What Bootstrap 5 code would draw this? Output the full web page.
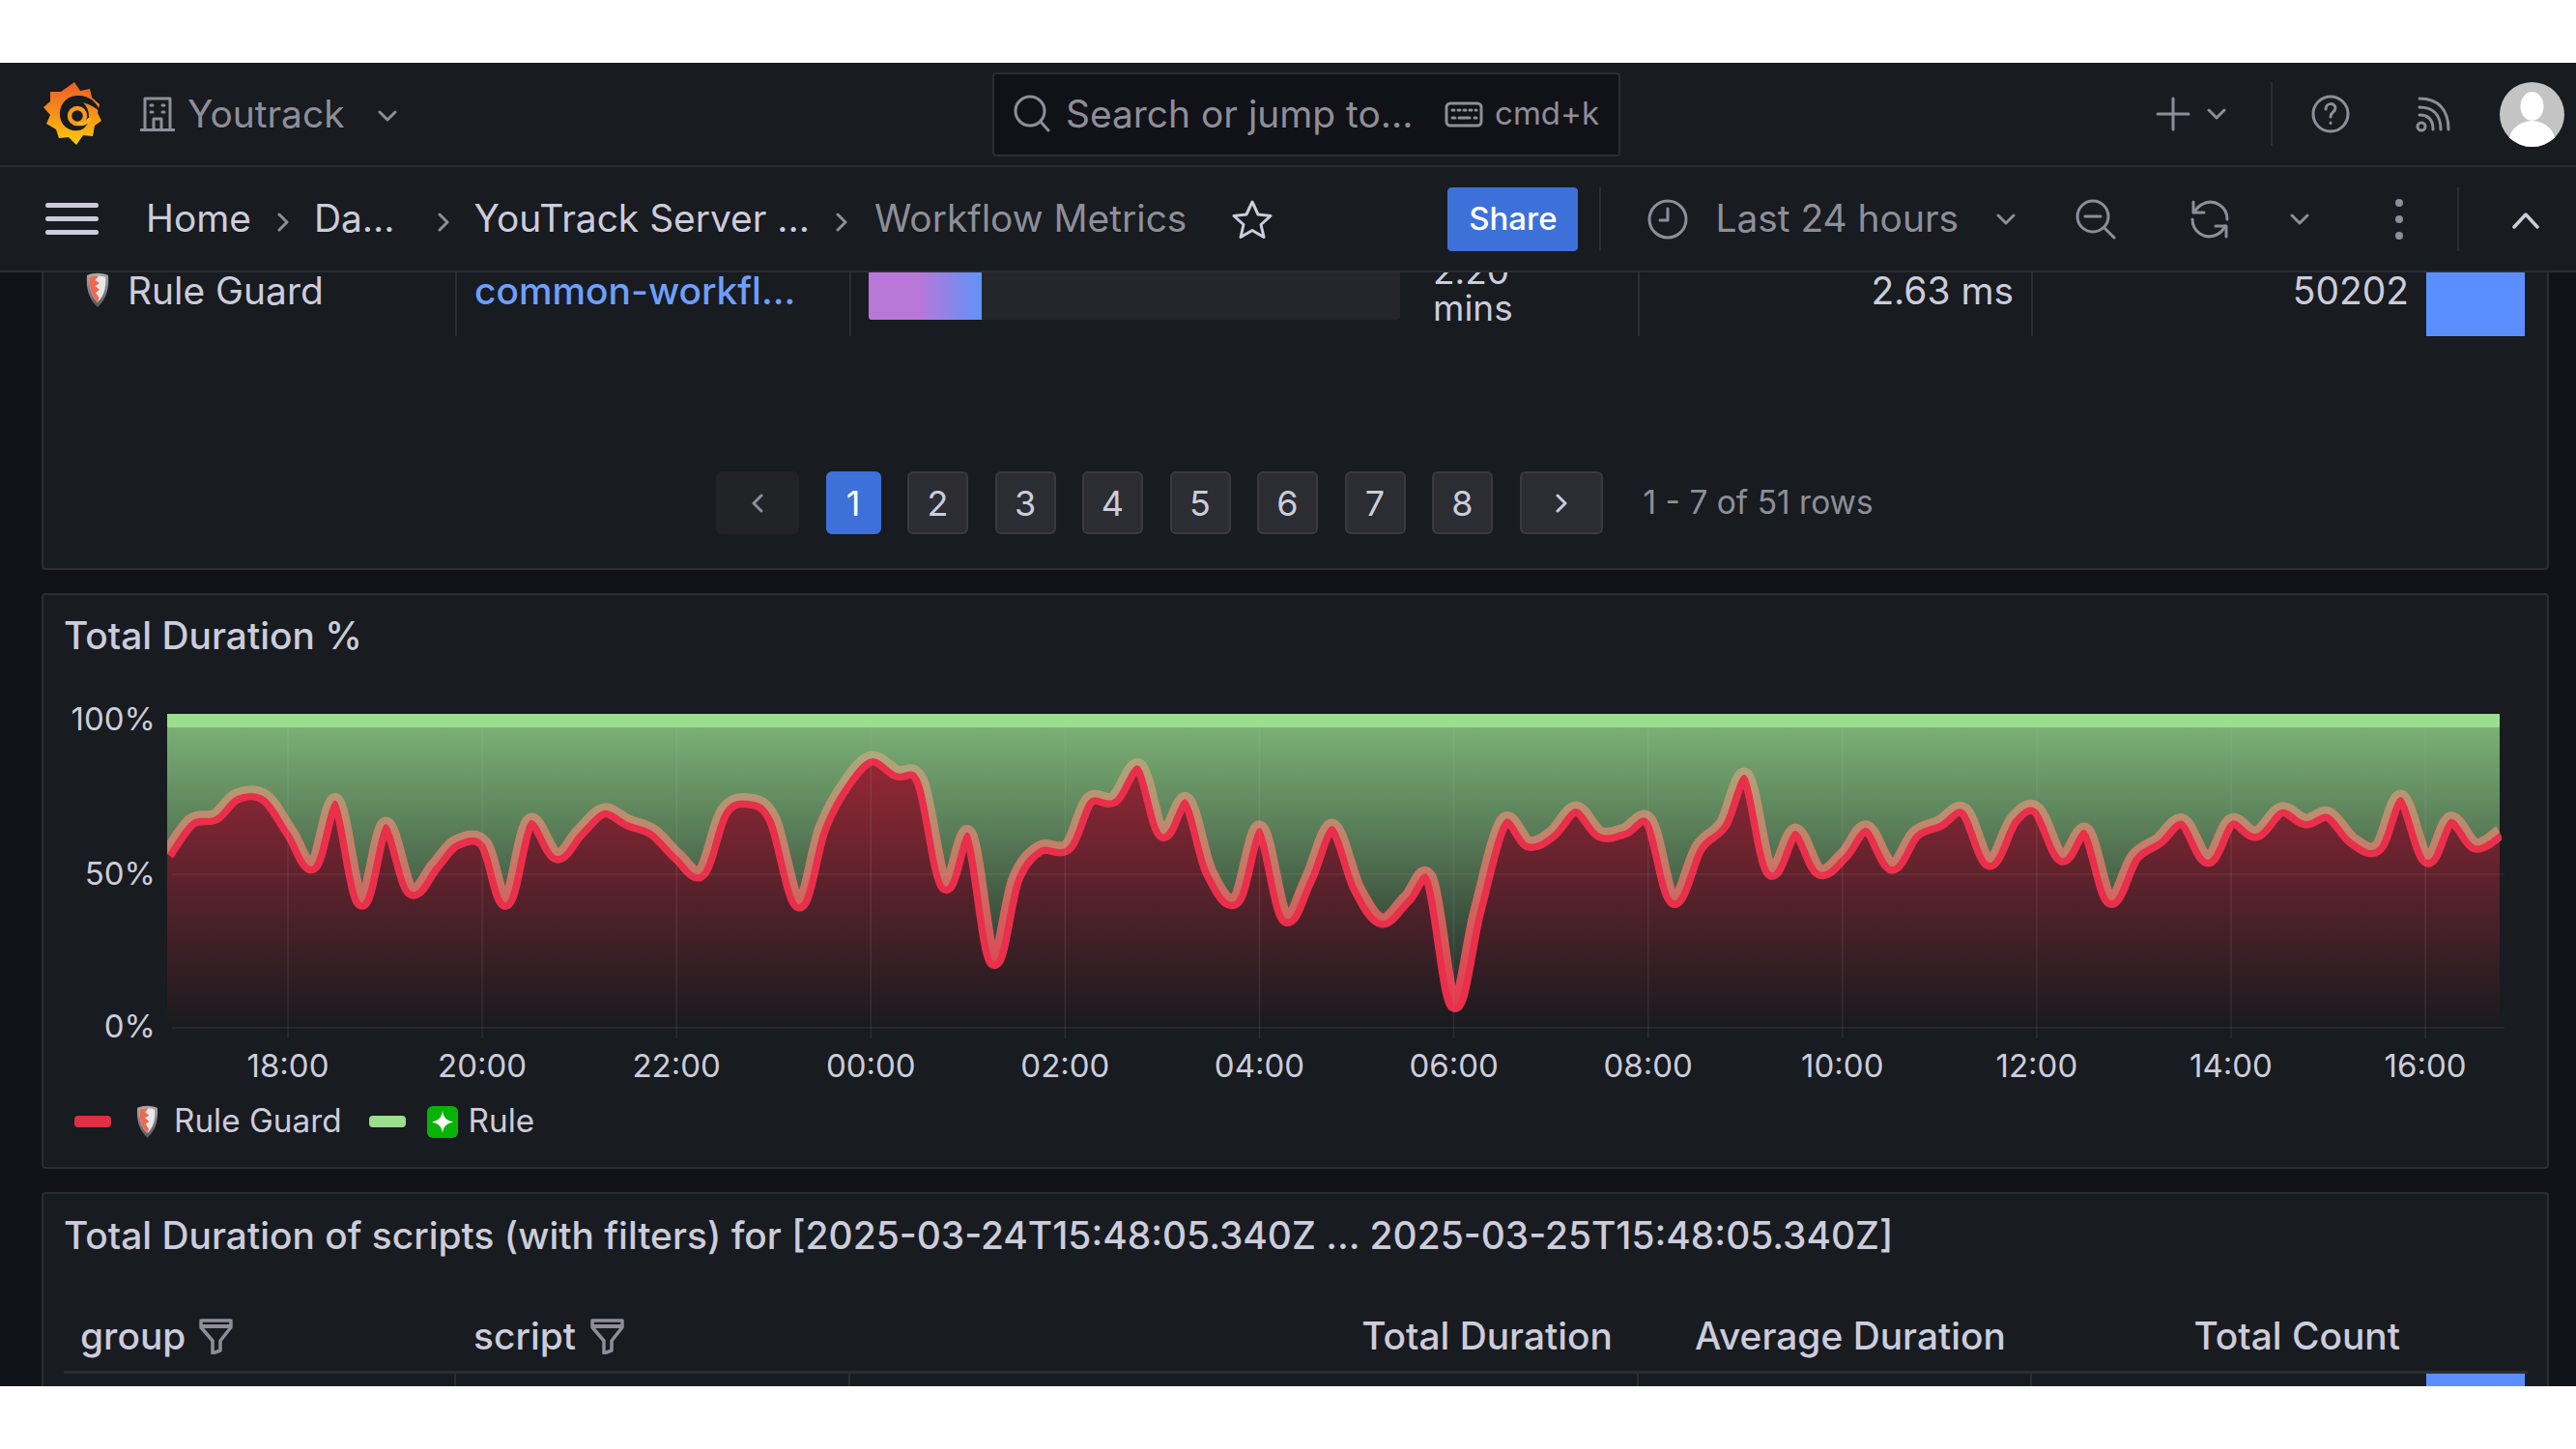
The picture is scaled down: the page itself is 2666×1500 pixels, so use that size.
<!DOCTYPE html>
<html lang="en">

<head>
  <meta charset="UTF-8">
  <meta name="viewport" content="width=device-width, initial-scale=1.0">
  <title>Workflow Metrics</title>
  <link href="https://cdn.jsdelivr.net/npm/bootstrap@5.3.0/dist/css/bootstrap.min.css" rel="stylesheet">
  <style>
    html, body { background: #fff; }
    body { font-family: Inter, "Liberation Sans", sans-serif; font-size: 38.900px; color: #ccccdc; overflow: hidden; }
    .app-frame { height: 1370px; margin-top: 65px; background: #111217; overflow: hidden; }
    .muted-text { color: #8e8e9a; }
    svg { display: block; flex: none; }
    .ico { fill: none; stroke: #8e8e9a; stroke-width: 3; stroke-linecap: round; stroke-linejoin: round; }

    .top-bar { height: 108px; background: #181b1f; border-bottom: 2px solid #2b2d31; display: grid; grid-template-columns: 1027px 650px 1fr; align-items: center; }
    .search-box { height: 87px; background: #111217; border: 2px solid #2b2d31; border-radius: 4px; padding: 0 20px 0 20px; }
    .search-box .hint { font-size: 33px; margin-left: 12px; }
    .search-box .placeholder-text { margin-left: 16px; }
    .org-name { margin-left: 13px; }

    .tool-bar { height: 109px; background: #181b1f; border-bottom: 2px solid #2b2d31; }
    .crumb-sep { margin: 6px 26px 0 27px; }
    .vr-line { width: 2px; background: #2b2d31; height: 66px; }
    .share-btn { --bs-btn-bg: #3d71d9; --bs-btn-border-color: #3d71d9; --bs-btn-color: #fff; width: 135px; height: 66px; padding: 0; font-size: 33px; font-weight: 500; border-radius: 4px; }

    .dash-scroll { height: 1153px; overflow: hidden; padding: 0 28px 0 43px; }
    .dash-inner { margin-top: -44px; display: flex; flex-direction: column; gap: 24px; }
    .dash-panel { background: #181b1f; border: 2px solid #2b2d31; border-radius: 4px; color: #ccccdc; }
    .panel-title { font-weight: 500; line-height: 46px; padding-left: 21px; }

    .data-table { table-layout: fixed; width: 2547px; margin: 0 0 0 21px; border-collapse: collapse; color: #ccccdc; }
    .data-table td { padding: 0; font-size: 38.900px; font-weight: 400; vertical-align: top; background: transparent; border: 0; }
    .data-table td + td { border-left: 2px solid #2b2d31; }
    .data-table a { color: #6e9fff; font-weight: 500; text-decoration: none; }
    .cell-inner { height: 108px; padding: 38px 18px 0; line-height: 46px; }
    .bar-cell { height: 91px; padding: 0 18px; gap: 34px; }
    .bar-track { width: 550px; height: 91px; background: #24262b; border-radius: 3px; overflow: hidden; }
    .bar-fill { height: 100%; background: linear-gradient(90deg, #b877d9 45%, #5f93f8 100%); }
    .wrap-text { font-size: 37px; line-height: 38px; padding-top: 22px; }
    .shield-cell { margin: 4px 19px 0 0; }
    .count-bar { width: 102px; background: #5b8fff; flex: none; }

    .pager-row { margin: 140px 0 35px; height: 65px; padding-left: 696px; }
    .pager-list { margin: 0; gap: 28.500px; }
    .pager-list .page-link { width: 63px; height: 65px; padding: 0; display: flex; align-items: center; justify-content: center; font-size: 36px; color: #ccccdc; background: #2b2d33; border: 2px solid #393b40; border-radius: 6px !important; margin: 0; }
    .pager-list .page-item.active .page-link { width: 57px; background: #3d71d9; border-color: #3d71d9; color: #fff; }
    .pager-list .wide-link .page-link { width: 86px; }
    .pager-list .page-item.disabled .page-link { background: #222327; border-color: #222327; }
    .pager-info { font-size: 33.500px; margin-left: 42px; }

    .chart-panel { height: 596px; padding-top: 19px; }
    .chart-svg { margin-top: 35px; }
    .chart-svg text { font-family: Inter, "Liberation Sans", sans-serif; font-size: 33px; fill: #ccccdc; }
    .chart-legend { font-size: 33.300px; padding-left: 32px; height: 46px; }
    .legend-pill { width: 38px; height: 12px; border-radius: 4px; margin-right: 25px; }
    .pill-red { background: #e02f44; }
    .pill-green { background: #9ade8e; }

    .table-panel { height: 300px; padding-top: 20px; }
    .head-row { margin-left: 21px; width: 2550px; height: 120px; border-bottom: 3px solid #2b2d31; font-weight: 500; padding-top: 58px; }
    .head-col { height: 46px; line-height: 46px; padding-right: 27px; }
    .col-a { width: 406px; padding-left: 17px; }
    .col-b { width: 408px; padding-left: 18px; }
    .col-c { width: 816px; }
    .col-d { width: 407px; }
    .col-e { width: 408px; }
    .last-spacer { width: 102px; }
    .tail-row { margin-left: 21px; width: 2550px; height: 60px; }
    .tail-cell { border-right: 2px solid #2b2d31; }
  </style>
</head>

<body>
  <div class="app-frame">
    <!-- top bar -->
    <div class="top-bar">
      <div class="d-flex align-items-center" style="padding-left:45px">
        <svg width="60" height="66" viewBox="0 0 60 66">
          <defs>
            <linearGradient id="logoGrad" x1="0" y1="0" x2="0" y2="1">
              <stop offset="0" stop-color="#f05a28" />
              <stop offset="1" stop-color="#fbca0a" />
            </linearGradient>
          </defs>
          <path fill="url(#logoGrad)" d="M32 0 L38 9 L48 7 L50 16 L58 23 L56 32 L60 40 L53 45 L51 56 L41 55 L34 65 L26 57 L16 58 L13 49 L3 43 L7 34 L0 26 L7 20 L7 10 L18 10 Z" />
          <path fill="#181b1f" d="M59 32C56 20 46 13 34 14 22 15 16 25 17 35c1 11 10 16 19 15 7-1 11-7 11-14 0-6-2-11-6-15 9 3 14 6 18 11z" />
          <circle cx="35" cy="35" r="8" fill="none" stroke="#f79a1c" stroke-width="4.500" />
          <path fill="none" stroke="#f9b414" stroke-width="4" stroke-linecap="round" d="M37 43c4 1 8-1 10-4" />
          <circle cx="35" cy="35" r="3" fill="#181b1f" />
        </svg>
        <svg style="margin-left:40px" width="36" height="38" viewBox="0 0 36 38">
          <path class="ico" d="M5 35V3h26v32M1 35.500h34M14 35V24h8v11" />
          <path class="ico" stroke-width="4" d="M11 10h2M23 10h2M11 17h2M23 17h2" />
        </svg>
        <span class="org-name muted-text">Youtrack</span>
        <svg style="margin-left:34px;margin-top:4px" width="20" height="12" viewBox="0 0 20 12"><path class="ico" d="M2 2l8 8 8-8" /></svg>
      </div>
      <div class="search-box d-flex align-items-center muted-text">
        <svg width="38" height="40" viewBox="0 0 38 40"><circle class="ico" cx="17" cy="17" r="15" /><path class="ico" d="M28 28l8 9" /></svg>
        <span class="placeholder-text">Search or jump to...</span>
        <svg class="ms-auto" width="40" height="27" viewBox="0 0 40 27">
          <rect class="ico" x="2" y="2" width="36" height="23" rx="4" />
          <path class="ico" d="M8 9h2M14 9h2M20 9h2M26 9h2M32 9h1M8 17h3M15 17h11M31 17h2" />
        </svg>
        <span class="hint">cmd+k</span>
      </div>
      <div class="d-flex align-items-center justify-content-end" style="padding-right:12px">
        <svg width="36" height="36" viewBox="0 0 36 36"><path class="ico" d="M18 2v32M2 18h32" /></svg>
        <svg style="margin-left:17px" width="20" height="12" viewBox="0 0 20 12"><path class="ico" d="M2 2l8 8 8-8" /></svg>
        <div class="vr-line" style="margin-left:46px"></div>
        <svg style="margin-left:40px" width="40" height="42" viewBox="0 0 40 42">
          <circle class="ico" cx="20" cy="21" r="18" />
          <path class="ico" d="M15 16c0-7 10-7 10-1 0 4-5 4-5 9M20 30v.5" />
        </svg>
        <svg style="margin-left:68px" width="36" height="38" viewBox="0 0 36 38">
          <circle cx="6" cy="32" r="4" fill="none" stroke="#8e8e9a" stroke-width="3" />
          <path class="ico" d="M4 20c9 0 14 5 14 15M4 12c14 0 22 8 22 23M4 3c20 0 30 12 30 32" />
        </svg>
        <svg style="margin-left:51px" width="67" height="67" viewBox="0 0 67 67">
          <clipPath id="avatarClip"><circle cx="33.500" cy="33.500" r="33.500" /></clipPath>
          <circle cx="33.500" cy="33.500" r="33.500" fill="#c4c4c4" />
          <g clip-path="url(#avatarClip)" fill="#fff">
            <ellipse cx="33.500" cy="25" rx="12" ry="15" />
            <ellipse cx="33.500" cy="62" rx="24" ry="22" />
          </g>
        </svg>
      </div>
    </div>

    <!-- breadcrumbs and time picker -->
    <div class="tool-bar d-flex align-items-center">
      <svg style="margin-left:47px" width="55" height="34" viewBox="0 0 55 34" fill="#ccccdc">
        <rect y="0" width="55" height="5" rx="2.500" /><rect y="14" width="55" height="5" rx="2.500" /><rect y="28" width="55" height="5" rx="2.500" />
      </svg>
      <span style="margin-left:49px">Home</span>
      <svg class="crumb-sep" width="12" height="20" viewBox="0 0 12 20"><path class="ico" d="M2 2l8 8-8 8" /></svg>
      <span>Da...</span>
      <svg style="margin:6px 26px 0 44px" width="12" height="20" viewBox="0 0 12 20"><path class="ico" d="M2 2l8 8-8 8" /></svg>
      <span>YouTrack Server ...</span>
      <svg style="margin:6px 28px 0 27px" width="12" height="20" viewBox="0 0 12 20"><path class="ico" d="M2 2l8 8-8 8" /></svg>
      <span class="muted-text">Workflow Metrics</span>
      <svg style="margin-left:47px" width="42" height="40" viewBox="0 0 42 40">
        <path fill="none" stroke="#ccccdc" stroke-width="3" stroke-linejoin="round" d="M21 2l6 13 13 1.500-10 9 3 13-12-7-12 7 3-13-10-9L15 15z" />
      </svg>
      <button type="button" class="btn share-btn" style="margin-left:181px">Share</button>
      <div class="vr-line" style="margin-left:22px"></div>
      <svg style="margin-left:48px" width="42" height="42" viewBox="0 0 42 42">
        <circle class="ico" cx="21" cy="21" r="19" /><path class="ico" d="M21 10v12h-8" />
      </svg>
      <span class="muted-text" style="margin-left:28px">Last 24 hours</span>
      <svg style="margin-left:39px" width="20" height="12" viewBox="0 0 20 12"><path class="ico" d="M2 2l8 8 8-8" /></svg>
      <svg style="margin-left:62px" width="42" height="42" viewBox="0 0 42 42">
        <circle class="ico" cx="18" cy="18" r="16" /><path class="ico" d="M30 30l10 10M10 18h16" />
      </svg>
      <svg style="margin-left:76px" width="42" height="42" viewBox="0 0 42 42">
        <path class="ico" d="M4 3v11h11M38 39V28H27" />
        <path class="ico" d="M5 14C10 4 22 0 31 6c6 4 8 10 8 15M37 28c-5 10-17 14-26 8-6-4-8-10-8-15" />
      </svg>
      <svg style="margin-left:62px" width="20" height="12" viewBox="0 0 20 12"><path class="ico" d="M2 2l8 8 8-8" /></svg>
      <svg style="margin-left:89px" width="8" height="42" viewBox="0 0 8 42" fill="#8e8e9a"><circle cx="4" cy="4" r="4" /><circle cx="4" cy="21" r="4" /><circle cx="4" cy="38" r="4" /></svg>
      <div class="vr-line" style="margin-left:56px"></div>
      <svg style="margin-left:55px;margin-top:4px" width="28" height="17" viewBox="0 0 28 17"><path fill="none" stroke="#ccccdc" stroke-width="3.500" stroke-linecap="round" stroke-linejoin="round" d="M2 15L14 2l12 13" /></svg>
    </div>

    <!-- dashboard -->
    <div class="dash-scroll">
      <div class="dash-inner">
        <div class="dash-panel">
          <table class="data-table table-borderless mb-0">
            <colgroup><col style="width:406px"><col style="width:408px"><col style="width:816px"><col style="width:407px"><col style="width:510px"></colgroup>
            <tbody>
              <tr>
                <td>
                  <div class="cell-inner d-flex" style="padding-left:23px">
                    <svg class="shield-cell" width="24" height="36" viewBox="0 0 24 36"><use href="#shieldIcon" /></svg>
                    <span>Rule Guard</span>
                  </div>
                </td>
                <td><div class="cell-inner"><a href="#">common-workfl...</a></div></td>
                <td>
                  <div class="bar-cell d-flex">
                    <div class="bar-track"><div class="bar-fill" style="width:21.300%"></div></div>
                    <div class="wrap-text">2.20<br>mins</div>
                  </div>
                </td>
                <td><div class="cell-inner text-end">2.63 ms</div></td>
                <td>
                  <div class="d-flex justify-content-end" style="height:108px">
                    <div class="cell-inner text-end">50202</div>
                    <div class="count-bar"></div>
                  </div>
                </td>
              </tr>
            </tbody>
          </table>
          <div class="pager-row d-flex align-items-center">
            <ul class="pagination pager-list">
              <li class="page-item disabled wide-link"><a class="page-link" href="#"><svg width="12" height="20" viewBox="0 0 12 20"><path class="ico" d="M10 2l-8 8 8 8" /></svg></a></li>
              <li class="page-item active"><a class="page-link" href="#">1</a></li>
              <li class="page-item"><a class="page-link" href="#">2</a></li>
              <li class="page-item"><a class="page-link" href="#">3</a></li>
              <li class="page-item"><a class="page-link" href="#">4</a></li>
              <li class="page-item"><a class="page-link" href="#">5</a></li>
              <li class="page-item"><a class="page-link" href="#">6</a></li>
              <li class="page-item"><a class="page-link" href="#">7</a></li>
              <li class="page-item"><a class="page-link" href="#">8</a></li>
              <li class="page-item wide-link"><a class="page-link" href="#"><svg width="12" height="20" viewBox="0 0 12 20"><path fill="none" stroke="#ccccdc" stroke-width="3" stroke-linecap="round" stroke-linejoin="round" d="M2 2l8 8-8 8" /></svg></a></li>
            </ul>
            <span class="pager-info muted-text">1 - 7 of 51 rows</span>
          </div>
        </div>

        <div class="dash-panel chart-panel">
          <div class="panel-title">Total Duration %</div>
          <!-- svg coordinates are page pixels, shifted by the translate below -->
          <svg class="chart-svg" width="2590" height="422" viewBox="0 0 2590 422">
            <defs>
              <linearGradient id="redFill" gradientUnits="userSpaceOnUse" x1="0" y1="746" x2="0" y2="1064">
                <stop offset="0" stop-color="#e02f44" stop-opacity=".72" />
                <stop offset="1" stop-color="#e02f44" stop-opacity="0" />
              </linearGradient>
              <linearGradient id="greenFill" gradientUnits="userSpaceOnUse" x1="0" y1="746" x2="0" y2="1064">
                <stop offset="0" stop-color="#96d98d" stop-opacity=".8" />
                <stop offset="1" stop-color="#96d98d" stop-opacity="0" />
              </linearGradient>
              <clipPath id="plotClip"><rect x="173" y="730" width="2416" height="340" /></clipPath>
            </defs>
            <g transform="translate(-45,-716)">
              <g clip-path="url(#plotClip)">
                <path id="redArea" fill="url(#redFill)" />
                <path id="redLine" fill="none" stroke="#ea2f4a" stroke-width="15" stroke-linejoin="round" />
                <path id="greenArea" fill="url(#greenFill)" />
              </g>
              <rect x="173" y="739" width="2414" height="14" fill="#9ade8e" />
              <g id="gridLines" stroke="#ccccdc" stroke-opacity=".1" stroke-width="1.500"></g>
              <g id="xLabels" text-anchor="middle"></g>
              <g text-anchor="end">
                <text x="161" y="756">100%</text>
                <text x="161" y="916">50%</text>
                <text x="161" y="1074">0%</text>
              </g>
            </g>
          </svg>
          <div class="chart-legend d-flex align-items-center">
            <span class="legend-pill pill-red"></span>
            <svg style="margin-right:15px" width="25" height="34" viewBox="0 0 24 36"><use href="#shieldIcon" /></svg>
            <span>Rule Guard</span>
            <span class="legend-pill pill-green" style="margin-left:28px;margin-right:22px"></span>
            <svg style="margin-right:11px" width="32" height="33" viewBox="0 0 32 33">
              <rect width="32" height="33" rx="6" fill="#08b308" />
              <path fill="#fff" d="M16 5c1 7 4 10 11 11.500-7 1.500-10 4.500-11 11.500-1-7-4-10-11-11.500C12 15 15 12 16 5z" />
            </svg>
            <span>Rule</span>
          </div>
        </div>

        <div class="dash-panel table-panel">
          <div class="panel-title">Total Duration of scripts (with filters) for [2025-03-24T15:48:05.340Z ... 2025-03-25T15:48:05.340Z]</div>
          <div class="head-row d-flex align-items-start">
            <div class="head-col col-a d-flex align-items-center">group
              <svg style="margin-left:13px" width="37" height="38" viewBox="0 0 37 38"><use href="#filterIcon" /></svg>
            </div>
            <div class="head-col col-b d-flex align-items-center">script
              <svg style="margin-left:14px" width="37" height="38" viewBox="0 0 37 38"><use href="#filterIcon" /></svg>
            </div>
            <div class="head-col col-c text-end">Total Duration</div>
            <div class="head-col col-d text-end">Average Duration</div>
            <div class="head-col col-e text-end">Total Count</div>
            <div class="last-spacer"></div>
          </div>
          <div class="tail-row d-flex">
            <div class="tail-cell col-a"></div>
            <div class="tail-cell col-b"></div>
            <div class="tail-cell col-c"></div>
            <div class="tail-cell col-d"></div>
            <div class="col-e"></div>
            <div class="count-bar"></div>
          </div>
        </div>
      </div>
    </div>
  </div>

  <!-- shared icons -->
  <svg width="0" height="0" style="position:absolute">
    <defs>
      <linearGradient id="shieldRim" x1="0" y1="0" x2="0" y2="1">
        <stop offset="0" stop-color="#a9a9a9" />
        <stop offset="1" stop-color="#55575a" />
      </linearGradient>
      <symbol id="shieldIcon" viewBox="0 0 24 36">
        <path fill="url(#shieldRim)" d="M1 3C8 0 16 0 23 3c1 12-1 24-11 33C2 27 0 15 1 3z" />
        <path fill="#e7e7ea" d="M4 5c5-2 11-2 16 0 1 10-1 19-8 26C5 24 3 15 4 5z" />
        <path fill="#ec6a50" d="M4 5c2-1 6-1.500 9-1.500L9.500 8 14 11l-4.500 3 4.500 4-4 3 3.500 5-1 5C5 24 3 15 4 5z" />
      </symbol>
      <symbol id="filterIcon" viewBox="0 0 37 38">
        <path fill="none" stroke="#8e8e9a" stroke-width="3.500" stroke-linejoin="round" d="M3 3h31v7L23 24v10l-8 3V24L3 10z" />
        <path stroke="#8e8e9a" stroke-width="4" d="M3 9h31" />
      </symbol>
    </defs>
  </svg>

  <script>
    // red line, read off the picture as [x, y] in page pixels
    const points = [[173,884],[198,850],[223,845],[245,824],[274,825],[300,861],[324,896],[348,829],[374,934],[399,853],[425,922],[450,896],[472,872],[501,873],[524,934],[548,850],[576,886],[600,861],[625,839],[650,851],[676,861],[701,886],[726,903],[749,840],[775,829],[800,848],[827,936],[851,857],[877,809],[902,785],[928,800],[953,809],[978,917],[1003,863],[1028,995],[1051,910],[1076,878],[1105,876],[1127,828],[1153,827],[1179,793],[1203,863],[1228,828],[1252,903],[1279,932],[1304,857],[1330,950],[1354,910],[1379,855],[1405,920],[1430,953],[1456,930],[1480,910],[1505,1040],[1529,943],[1556,850],[1582,873],[1606,863],[1631,837],[1656,863],[1681,860],[1707,850],[1732,932],[1758,877],[1783,853],[1807,803],[1832,902],[1858,860],[1883,902],[1908,885],[1932,857],[1958,897],[1982,863],[2007,852],[2033,839],[2059,893],[2084,848],[2108,838],[2134,888],[2159,860],[2184,932],[2209,887],[2234,870],[2259,850],[2285,890],[2309,850],[2335,863],[2361,838],[2386,850],[2410,843],[2435,870],[2461,877],[2485,825],[2512,890],[2536,848],[2562,875],[2587,862]];

    function splinePath(pts) {
      let d = `M${pts[0][0]} ${pts[0][1]}`;
      for (let i = 0; i < pts.length - 1; i++) {
        const p0 = pts[Math.max(i - 1, 0)], p1 = pts[i], p2 = pts[i + 1], p3 = pts[Math.min(i + 2, pts.length - 1)];
        const c1x = p1[0] + (p2[0] - p0[0]) / 6, c1y = p1[1] + (p2[1] - p0[1]) / 6;
        const c2x = p2[0] - (p3[0] - p1[0]) / 6, c2y = p2[1] - (p3[1] - p1[1]) / 6;
        d += `C${c1x} ${c1y} ${c2x} ${c2y} ${p2[0]} ${p2[1]}`;
      }
      return d;
    }

    const line = splinePath(points);
    document.getElementById('redLine').setAttribute('d', line);
    document.getElementById('redArea').setAttribute('d', `${line}L2587 1064L173 1064Z`);
    document.getElementById('greenArea').setAttribute('d', `${line}L2587 746L173 746Z`);

    const svgNs = 'http://www.w3.org/2000/svg';
    const grid = document.getElementById('gridLines');
    const labels = document.getElementById('xLabels');
    ['18:00','20:00','22:00','00:00','02:00','04:00','06:00','08:00','10:00','12:00','14:00','16:00'].forEach((label, i) => {
      const x = 298 + i * 201.1;
      const tick = document.createElementNS(svgNs, 'line');
      tick.setAttribute('x1', x); tick.setAttribute('x2', x);
      tick.setAttribute('y1', 753); tick.setAttribute('y2', 1075);
      grid.appendChild(tick);
      const text = document.createElementNS(svgNs, 'text');
      text.setAttribute('x', x); text.setAttribute('y', 1115);
      text.textContent = label;
      labels.appendChild(text);
    });
    [905, 1064].forEach(y => {
      const rule = document.createElementNS(svgNs, 'line');
      rule.setAttribute('x1', 178); rule.setAttribute('x2', 2592);
      rule.setAttribute('y1', y); rule.setAttribute('y2', y);
      grid.appendChild(rule);
    });
  </script>
  <script src="https://cdn.jsdelivr.net/npm/bootstrap@5.3.0/dist/js/bootstrap.bundle.min.js"></script>
</body>

</html>
